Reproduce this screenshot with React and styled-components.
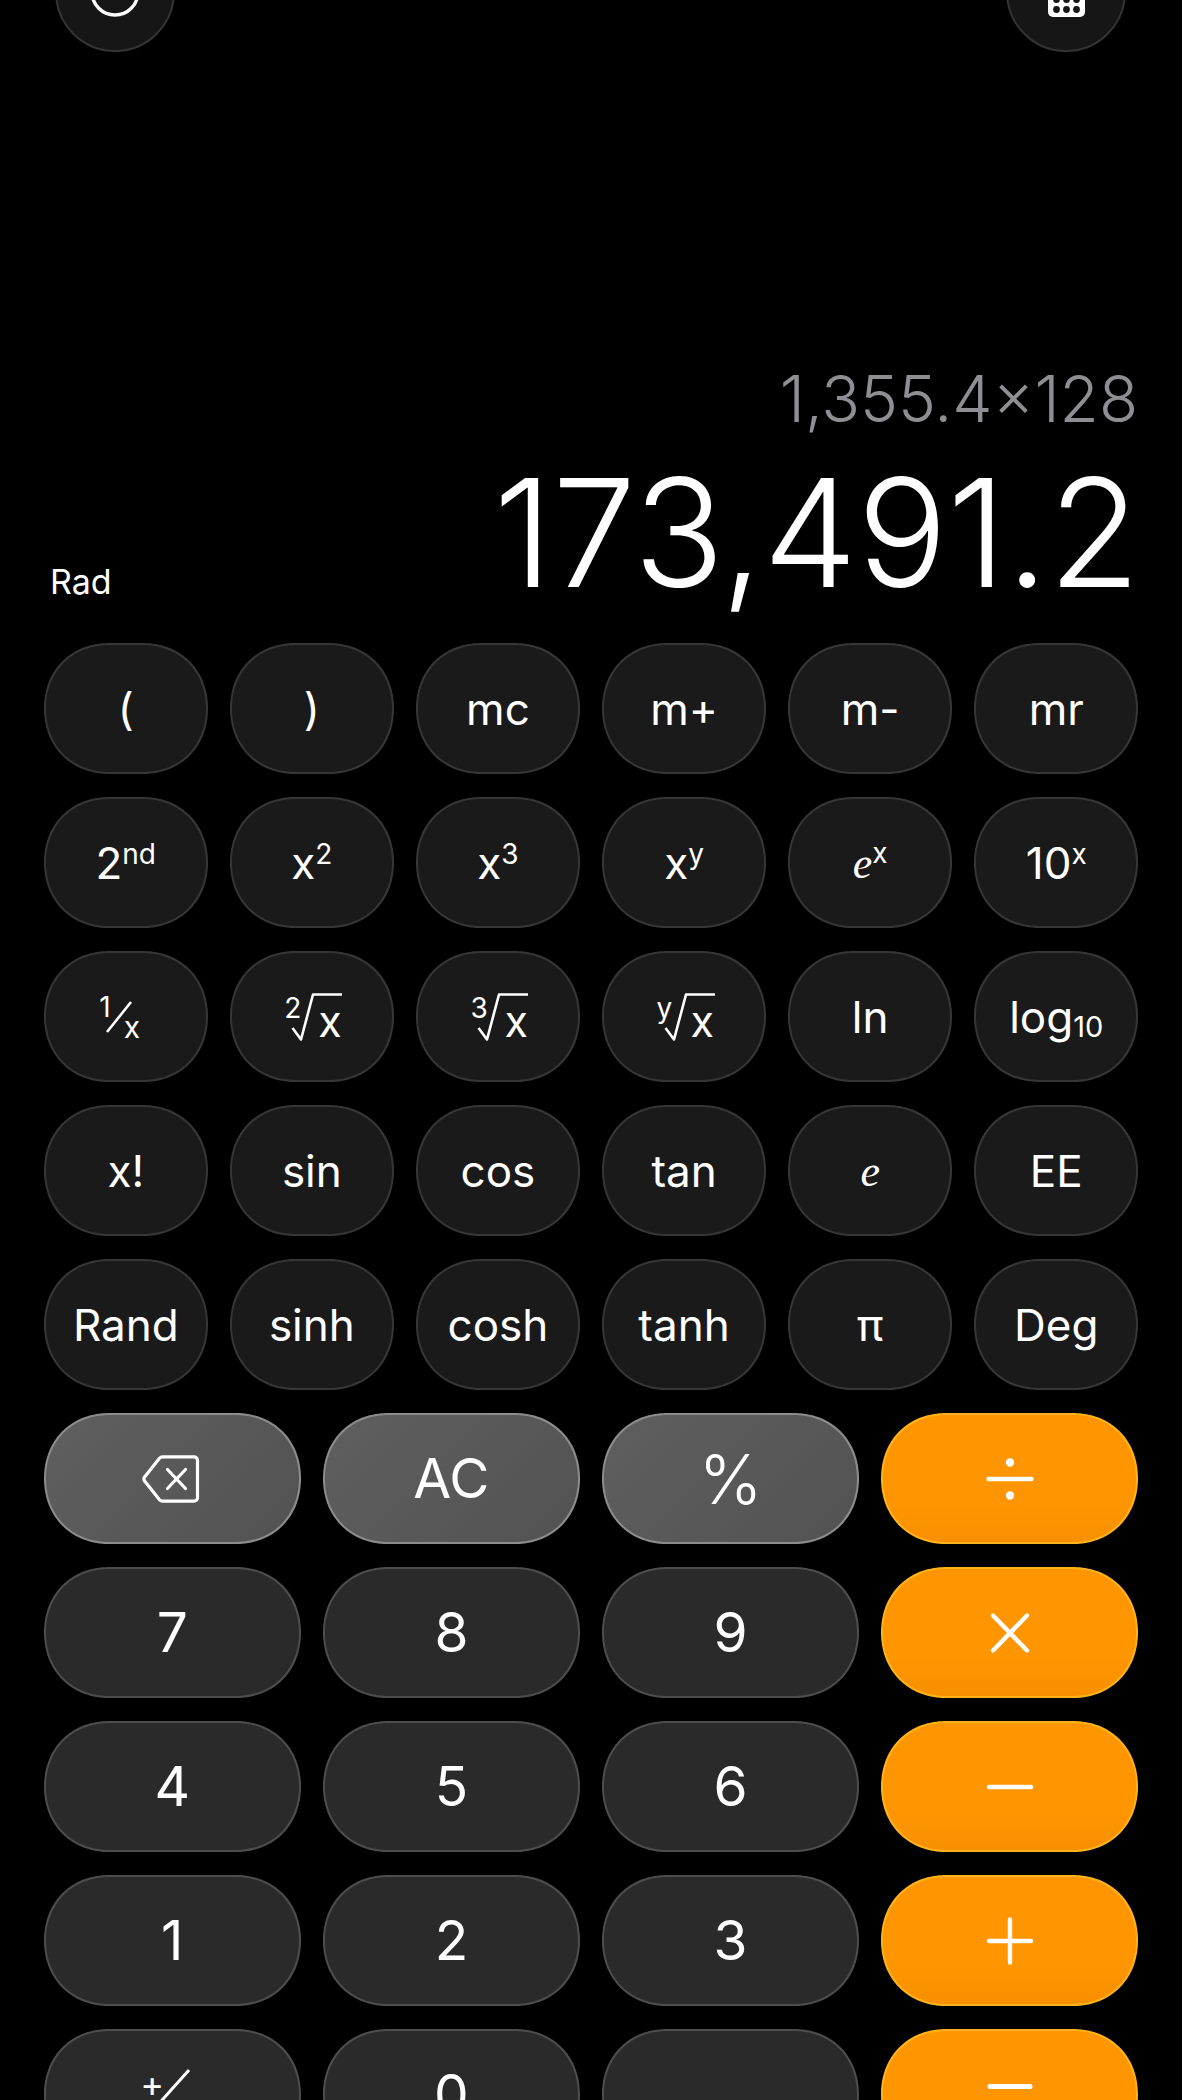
import React from "react";
import styled, { createGlobalStyle, css } from "styled-components";

const Global = createGlobalStyle`
  html, body {
    margin: 0;
    height: 2100px;
    overflow: hidden;
    background: #000;
  }
  #root { height: 2100px; overflow: hidden; }
`;

const SANS = `Inter, "Liberation Sans", sans-serif`;

const Page = styled.div`
  width: 1182px;
  height: 2100px;
  overflow: hidden;
  background: #000;
  color: #fff;
  font-family: ${SANS};
  display: flex;
  flex-direction: column;
  > * { flex: none; }
`;

const TopBar = styled.div`
  margin-top: -68px;
  padding: 0 56px 0 55px;
  display: flex;
  justify-content: space-between;
`;

const RoundButton = styled.button`
  width: 120px;
  height: 120px;
  padding: 0;
  border-radius: 50%;
  background: #161616;
  border: 2px solid #343434;
  display: flex;
  align-items: center;
  justify-content: center;
`;

const Display = styled.div`
  height: 591px;
  box-sizing: border-box;
  padding: 0 42px 0 50px;
  display: flex;
  flex-direction: column;
  justify-content: flex-end;
`;

const Expression = styled.div`
  align-self: flex-end;
  font-size: 64px;
  font-weight: 350;
  line-height: 64px;
  color: #8e8e93;
  margin-bottom: 27px;
  margin-right: 2px;
`;

const ResultRow = styled.div`
  display: flex;
  justify-content: space-between;
  align-items: flex-end;
  margin-bottom: 35px;
`;

const Mode = styled.span`
  font-size: 34px;
  font-weight: 375;
  line-height: 34px;
  margin-bottom: 9px;
`;

const Result = styled.span`
  font-size: 150px;
  font-weight: 350;
  line-height: 150px;
  letter-spacing: -0.2px;
`;

const Keypad = styled.div`
  padding: 0 44px;
  display: flex;
  flex-direction: column;
  gap: 23px;
`;

const KeyGrid = styled.div`
  display: grid;
  grid-template-columns: repeat(${(p) => p.$cols}, 1fr);
  grid-auto-rows: 131px;
  gap: 23px 22.6px;
`;

const tones = {
  sci: css`
    background: #1a1a1a;
    border-color: #363636;
    font-size: 44px;
  `,
  num: css`
    background: #2a2a2a;
    border-color: #4d4d4d;
    font-size: 55px;
  `,
  func: css`
    background: linear-gradient(135deg, #5f5f5f, #525252);
    border-color: #8c8c8c;
    font-size: 55px;
  `,
  op: css`
    background: linear-gradient(180deg, #ff9500 70%, #f78f00);
    border-color: #ffb31a;
    font-size: 55px;
  `,
};

const Key = styled.button`
  box-sizing: border-box;
  padding: 0;
  min-width: 0;
  border: 2px solid;
  border-radius: 66px;
  corner-shape: superellipse(1.08);
  color: #fff;
  font-family: ${SANS};
  font-weight: 375;
  line-height: 1;
  display: flex;
  align-items: center;
  justify-content: center;
  white-space: nowrap;
  ${(p) => tones[p.$tone]}
`;

const Sup = styled.span`
  font-size: 28px;
  line-height: 0;
  vertical-align: 15px;
`;

const Sub = styled.span`
  font-size: 29px;
  line-height: 0;
  vertical-align: -4px;
`;

const Italic = styled.span`
  font-family: "Liberation Serif", serif;
  font-style: italic;
  font-weight: 400;
  font-size: 44px;
`;

const Percent = styled.span`
  font-size: 68px;
  font-weight: 300;
`;

const Fraction = styled.span`
  display: flex;
  height: 40px;
  margin-left: -12px;
`;

const FractionTop = styled.span`
  align-self: flex-start;
  font-size: 28px;
  line-height: 21px;
`;

const FractionSlash = styled.svg`
  margin-left: -5px;
  margin-top: 4px;
  width: 26px;
  height: 32px;
`;

const FractionBottom = styled.span`
  align-self: flex-end;
  font-size: 30px;
  line-height: 20px;
  margin-left: -8px;
`;

const Root = styled.span`
  display: grid;
  width: 58px;
  height: 48px;
  margin-left: 3px;
  > * { grid-area: 1 / 1; }
`;

const RootIndex = styled.span`
  font-size: 28px;
  line-height: 22px;
  margin-top: 4px;
  justify-self: start;
  align-self: start;
`;

const RootBase = styled.span`
  font-size: 43px;
  line-height: 26px;
  margin: 15px 0 0 34px;
  justify-self: start;
  align-self: start;
`;

const Radical = styled.svg`
  width: 58px;
  height: 48px;
`;

const PlusMinus = styled.span`
  display: flex;
  height: 44px;
  width: 70px;
  margin-left: 6px;
`;

const PlusMinusTop = styled.span`
  font-size: 36px;
  line-height: 22px;
  align-self: flex-start;
`;

const PlusMinusSlash = styled.svg`
  width: 38px;
  height: 42px;
  margin: -5px 0 0 -11px;
  flex: none;
`;

const PlusMinusBottom = styled.span`
  font-size: 30px;
  line-height: 22px;
  align-self: flex-end;
  margin-left: -8px;
`;

const BackspaceSvg = styled.svg`
  margin-right: 3px;
`;

const Stroke = {
  stroke: "#fff",
  strokeLinecap: "round",
  strokeLinejoin: "round",
  fill: "none",
};

const RootKey = ({ index }) => (
  <Root>
    <Radical viewBox="0 0 58 48">
      <path d="M8.5 35 L17 46.5 L29 1.5 H58" strokeWidth="2.6" {...Stroke} strokeLinecap="butt" />
    </Radical>
    <RootIndex>{index}</RootIndex>
    <RootBase>x</RootBase>
  </Root>
);

const BackspaceIcon = () => (
  <BackspaceSvg width="58" height="48" viewBox="0 0 58 48">
    <path
      d="M20.5 1.8 H52 a3.5 3.5 0 0 1 3.5 3.5 V42.7 a3.5 3.5 0 0 1 -3.5 3.5 H20.5 a4 4 0 0 1 -3 -1.4 L3 26.6 a4 4 0 0 1 0 -5.2 L17.5 3.2 a4 4 0 0 1 3 -1.4 Z"
      strokeWidth="3.2"
      {...Stroke}
    />
    <path d="M25.5 14.5 L43.5 33.5 M43.5 14.5 L25.5 33.5" strokeWidth="3.2" {...Stroke} />
  </BackspaceSvg>
);

const OpIcon = ({ children }) => (
  <svg width="60" height="60" viewBox="0 0 60 60">
    {children}
  </svg>
);

const DivideIcon = () => (
  <OpIcon>
    <path d="M8.5 30 H51.5" strokeWidth="4.4" {...Stroke} />
    <circle cx="30" cy="13.5" r="4.2" fill="#fff" />
    <circle cx="30" cy="46.5" r="4.2" fill="#fff" />
  </OpIcon>
);

const TimesIcon = () => (
  <OpIcon>
    <path d="M13 12.5 L47 47.5 M47 12.5 L13 47.5" strokeWidth="4.4" {...Stroke} />
  </OpIcon>
);

const MinusIcon = () => (
  <OpIcon>
    <path d="M9 30 H51" strokeWidth="4.6" {...Stroke} />
  </OpIcon>
);

const PlusIcon = () => (
  <OpIcon>
    <path d="M9 30 H51 M30 8.5 V51.5" strokeWidth="4.4" {...Stroke} />
  </OpIcon>
);

const EqualsIcon = () => (
  <OpIcon>
    <path d="M10 21.5 H50 M10 38.5 H50" strokeWidth="5" {...Stroke} />
  </OpIcon>
);

const HistoryIcon = () => (
  <svg width="50" height="50" viewBox="0 0 50 50">
    <circle cx="25" cy="25" r="23" fill="none" stroke="#fff" strokeWidth="3.4" />
  </svg>
);

const KeypadIcon = () => (
  <svg width="37" height="50" viewBox="0 0 37 50">
    <rect width="37" height="50" rx="5" fill="#fff" />
    <rect x="6" y="5" width="25" height="9" rx="1.5" fill="#161616" />
    {[22.5, 32.5, 42.5].flatMap((cy) =>
      [8.5, 18.5, 28.5].map((cx) => (
        <circle key={`${cx}-${cy}`} cx={cx} cy={cy} r="3.4" fill="#161616" />
      ))
    )}
  </svg>
);

const sciKeys = [
  "(", ")", "mc", "m+", "m-", "mr",
  <>2<Sup>nd</Sup></>,
  <>x<Sup>2</Sup></>,
  <>x<Sup>3</Sup></>,
  <>x<Sup>y</Sup></>,
  <><Italic>e</Italic><Sup>x</Sup></>,
  <>10<Sup>x</Sup></>,
  <Fraction>
    <FractionTop>1</FractionTop>
    <FractionSlash viewBox="0 0 26 32">
      <path d="M25 1 L1 31" stroke="#fff" strokeWidth="2.6" fill="none" />
    </FractionSlash>
    <FractionBottom>x</FractionBottom>
  </Fraction>,
  <RootKey index="2" />,
  <RootKey index="3" />,
  <RootKey index="y" />,
  "ln",
  <>log<Sub>10</Sub></>,
  "x!", "sin", "cos", "tan",
  <Italic>e</Italic>,
  "EE",
  "Rand", "sinh", "cosh", "tanh", "π", "Deg",
];

const basicKeys = [
  { tone: "func", label: <BackspaceIcon /> },
  { tone: "func", label: "AC" },
  { tone: "func", label: <Percent>%</Percent> },
  { tone: "op", label: <DivideIcon /> },
  { tone: "num", label: "7" },
  { tone: "num", label: "8" },
  { tone: "num", label: "9" },
  { tone: "op", label: <TimesIcon /> },
  { tone: "num", label: "4" },
  { tone: "num", label: "5" },
  { tone: "num", label: "6" },
  { tone: "op", label: <MinusIcon /> },
  { tone: "num", label: "1" },
  { tone: "num", label: "2" },
  { tone: "num", label: "3" },
  { tone: "op", label: <PlusIcon /> },
  {
    tone: "num",
    label: (
      <PlusMinus>
        <PlusMinusTop>+</PlusMinusTop>
        <PlusMinusSlash viewBox="0 0 38 42">
          <path d="M36 2 L2 40" stroke="#fff" strokeWidth="3" fill="none" />
        </PlusMinusSlash>
        <PlusMinusBottom>−</PlusMinusBottom>
      </PlusMinus>
    ),
  },
  { tone: "num", label: "0" },
  { tone: "num", label: "." },
  { tone: "op", label: <EqualsIcon /> },
];

export default function App() {
  return (
    <Page>
      <Global />
      <TopBar>
        <RoundButton aria-label="History">
          <HistoryIcon />
        </RoundButton>
        <RoundButton aria-label="Keypad">
          <KeypadIcon />
        </RoundButton>
      </TopBar>
      <Display>
        <Expression>1,355.4×128</Expression>
        <ResultRow>
          <Mode>Rad</Mode>
          <Result>173,491.2</Result>
        </ResultRow>
      </Display>
      <Keypad>
        <KeyGrid $cols={6}>
          {sciKeys.map((label, i) => (
            <Key key={i} $tone="sci">
              <span>{label}</span>
            </Key>
          ))}
        </KeyGrid>
        <KeyGrid $cols={4}>
          {basicKeys.map((k, i) => (
            <Key key={i} $tone={k.tone}>
              {k.label}
            </Key>
          ))}
        </KeyGrid>
      </Keypad>
    </Page>
  );
}
